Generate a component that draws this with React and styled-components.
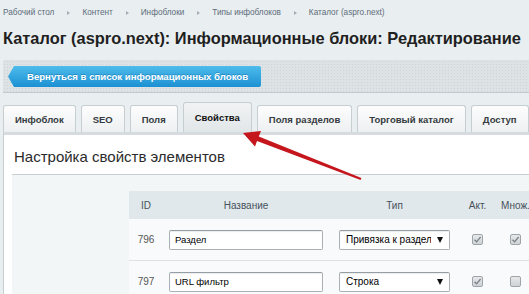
import React from 'react';
import styled, { createGlobalStyle } from 'styled-components';

const GlobalStyle = createGlobalStyle`
  html, body {
    margin: 0;
    padding: 0;
    overflow: hidden;
    background: #e9eef0;
  }
  body {
    font-family: "Liberation Sans", Arial, sans-serif;
  }
  * { box-sizing: border-box; }
`;

const Page = styled.div`
  position: relative;
  width: 600px;
  height: 294px;
  padding-left: 3px;
  overflow: hidden;
`;

const Crumbs = styled.div`
  display: flex;
  align-items: center;
  height: 25px;
  font-size: 8.2px;
  color: #5d6c7b;
  white-space: nowrap;
`;

const Sep = styled.span`
  width: 0;
  height: 0;
  border-left: 3px solid #a3adb5;
  border-top: 2.5px solid transparent;
  border-bottom: 2.5px solid transparent;
  margin: 0 12px 0 13px;
`;

const Title = styled.h1`
  margin: 3px 0 12px;
  font-size: 16.4px;
  line-height: 20px;
  font-weight: bold;
  color: #1f1f1f;
  white-space: nowrap;
`;

const Toolbar = styled.div`
  height: 33px;
  padding: 6px 0 0 5px;
  background-color: #dde3e5;
  background-image: radial-gradient(#cdd4d7 0.8px, transparent 0.8px);
  background-size: 3px 3px;
  border-bottom: 1px solid #c3cbce;
  border-radius: 2px 0 0 0;
`;

const BackButton = styled.a`
  display: inline-flex;
  align-items: center;
  height: 21px;
  padding: 0 13px 0 19px;
  font-size: 9.6px;
  font-weight: bold;
  color: #fff;
  text-shadow: 0 -1px 0 rgba(0, 80, 130, 0.35);
  background: linear-gradient(#4dbcec, #1c90d2);
  clip-path: polygon(6px 0, 100% 0, 100% 100%, 6px 100%, 0 50%);
  border-radius: 0 2px 2px 0;
  cursor: pointer;
  white-space: nowrap;
`;

const Tabs = styled.div`
  display: flex;
  align-items: flex-end;
  gap: 5px;
  margin-top: 9px;
  white-space: nowrap;
`;

const Tab = styled.div`
  display: flex;
  align-items: center;
  justify-content: center;
  height: ${(p) => (p.$active ? 30 : 27)}px;
  padding: 0 11px;
  font-size: 9.5px;
  font-weight: bold;
  color: ${(p) => (p.$active ? '#111' : '#353b40')};
  border: 1px solid #c7ced2;
  border-bottom: none;
  border-radius: 3px 3px 0 0;
  background: ${(p) =>
    p.$active
      ? 'linear-gradient(#f1f3f4, #e1e6e8)'
      : 'linear-gradient(#fdfdfd, #edf0f1)'};
`;

const Panel = styled.div`
  background: #fff;
  border-top: 3px solid #d5dbde;
  border-left: 1px solid #c6cdd1;
  padding: 0 0 0 8px;
  height: 200px;
`;

const Heading = styled.h2`
  margin: 0;
  padding: 12px 0 0 2px;
  font-size: 15px;
  line-height: 20px;
  font-weight: normal;
  color: #2b2b2b;
  white-space: nowrap;
`;

const Box = styled.div`
  margin-top: 7px;
  border-top: 1px solid #c9d0d3;
  background: #f3f6f7;
  padding: 16px 0 0 117px;
  height: 140px;
`;

const Grid = styled.div`
  display: grid;
  grid-template-columns: 34px 166px 131px 35px 41px;
  align-items: center;
  justify-items: center;
`;

const HeadRow = styled(Grid)`
  height: 28px;
  background: #e1e8eb;
  font-size: 10px;
  color: #47525c;
`;

const Row = styled(Grid)`
  height: 42px;
  background: #f9fafb;
  border-bottom: 1px solid #dbe1e4;
  font-size: 10px;
`;

const Id = styled.span`
  color: #555;
`;

const Input = styled.div`
  width: 154px;
  height: 20px;
  display: flex;
  align-items: center;
  padding-left: 5px;
  background: #fff;
  border: 1px solid #a9b1b6;
  border-top-color: #959ea4;
  border-radius: 2px;
  box-shadow: inset 0 1px 1px rgba(0, 0, 0, 0.08);
  font-size: 9.5px;
  color: #000;
`;

const Select = styled(Input)`
  width: 111px;
  padding: 0 6px 0 6px;
  gap: 6px;
  font-size: 10px;
`;

const SelectText = styled.span`
  flex: 1;
  overflow: hidden;
  white-space: nowrap;
`;

const Caret = styled.span`
  width: 0;
  height: 0;
  border-top: 6px solid #111;
  border-left: 3.5px solid transparent;
  border-right: 3.5px solid transparent;
`;

const Check = styled.span`
  display: flex;
  align-items: center;
  justify-content: center;
  width: 11px;
  height: 11px;
  border: 1px solid #9ea5aa;
  border-radius: 2px;
  background: linear-gradient(#e6e8ea, #cfd3d6);
`;

const Arrow = styled.svg`
  position: absolute;
  left: 0;
  top: 0;
  pointer-events: none;
`;

const Checkbox = ({ checked }) => (
  <Check>
    {checked && (
      <svg width="9" height="9" viewBox="0 0 9 9">
        <path d="M1.5 4.8 L3.6 6.8 L7.6 2" fill="none" stroke="#7a8288" strokeWidth="1.3" />
      </svg>
    )}
  </Check>
);

const crumbs = ['Рабочий стол', 'Контент', 'Инфоблоки', 'Типы инфоблоков', 'Каталог (aspro.next)'];
const tabs = ['Инфоблок', 'SEO', 'Поля', 'Свойства', 'Поля разделов', 'Торговый каталог', 'Доступ'];
const rows = [
  { id: 796, name: 'Раздел', type: 'Привязка к разделу', act: true, multi: true },
  { id: 797, name: 'URL фильтр', type: 'Строка', act: true, multi: false },
];

export default function App() {
  return (
    <Page>
      <GlobalStyle />
      <Crumbs>
        {crumbs.map((c, i) => (
          <React.Fragment key={c}>
            {i > 0 && <Sep />}
            <span>{c}</span>
          </React.Fragment>
        ))}
      </Crumbs>
      <Title>Каталог (aspro.next): Информационные блоки: Редактирование</Title>
      <Toolbar>
        <BackButton>Вернуться в список информационных блоков</BackButton>
      </Toolbar>
      <Tabs>
        {tabs.map((t) => (
          <Tab key={t} $active={t === 'Свойства'}>
            {t}
          </Tab>
        ))}
      </Tabs>
      <Panel>
        <Heading>Настройка свойств элементов</Heading>
        <Box>
          <HeadRow>
            <span>ID</span>
            <span>Название</span>
            <span>Тип</span>
            <span>Акт.</span>
            <span>Множ.</span>
          </HeadRow>
          {rows.map((r) => (
            <Row key={r.id}>
              <Id>{r.id}</Id>
              <Input>{r.name}</Input>
              <Select>
                <SelectText>{r.type}</SelectText>
                <Caret />
              </Select>
              <Checkbox checked={r.act} />
              <Checkbox checked={r.multi} />
            </Row>
          ))}
        </Box>
      </Panel>
      <Arrow width="529" height="294" viewBox="0 0 529 294">
        <polygon
          points="243,133 261,131 258.8,136.5 361.4,177.9 360.6,180.1 257,141.1 255,146.5"
          fill="#c4161c"
        />
      </Arrow>
    </Page>
  );
}
